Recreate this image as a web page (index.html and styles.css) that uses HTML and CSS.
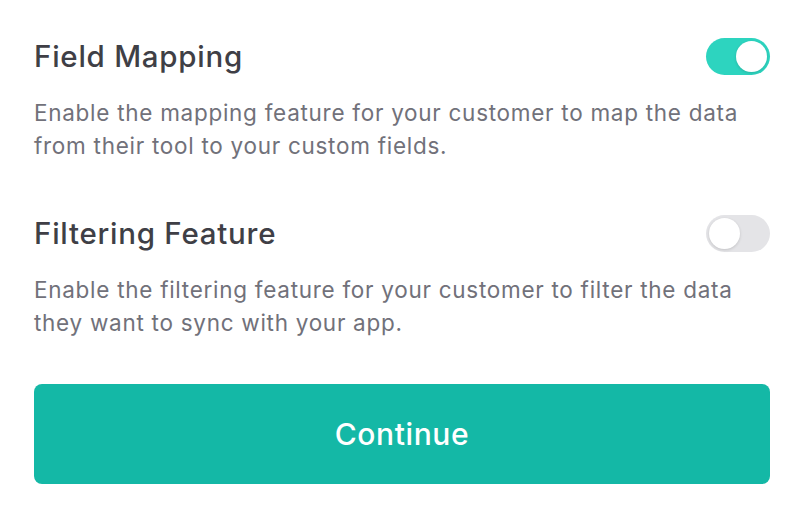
FILE: index.html
```html
<!DOCTYPE html>
<html>
<head>
<meta charset="utf-8">
<link rel="stylesheet" href="styles.css">
</head>
<body>
<div class="panel">
  <section class="setting">
    <div class="setting-head">
      <h2 class="setting-title">Field Mapping</h2>
      <span class="toggle on"><span class="knob"></span></span>
    </div>
    <p class="setting-desc">Enable the mapping feature for your customer to map the data from their tool to your custom fields.</p>
  </section>
  <section class="setting">
    <div class="setting-head">
      <h2 class="setting-title">Filtering Feature</h2>
      <span class="toggle"><span class="knob"></span></span>
    </div>
    <p class="setting-desc">Enable the filtering feature for your customer to filter the data they want to sync with your app.</p>
  </section>
  <button class="continue">Continue</button>
</div>
</body>
</html>
```
FILE: styles.css
```css
html, body {
  margin: 0;
  padding: 0;
  background: #ffffff;
}
body {
  font-family: Inter, "Noto Sans", sans-serif;
}
.panel {
  padding: 37px 40px 0 34px;
  display: flex;
  flex-direction: column;
}
.setting + .setting {
  margin-top: 52px;
}
.setting-head {
  display: flex;
  align-items: center;
  justify-content: space-between;
  height: 38px;
}
.setting-title {
  margin: 0;
  font-size: 29.5px;
  font-weight: 500;
  letter-spacing: 0.75px;
  color: #3f3f46;
  line-height: 38px;
}
.setting-desc {
  margin: 21px 0 0;
  font-size: 22.5px;
  letter-spacing: 0.72px;
  line-height: 33px;
  color: #71717a;
  max-width: 730px;
}
.toggle {
  width: 64px;
  height: 37px;
  border-radius: 19px;
  background: #e4e4e7;
  display: flex;
  align-items: center;
  padding: 0 3px;
  box-sizing: border-box;
}
.toggle.on {
  background: #2dd4bf;
  justify-content: flex-end;
}
.knob {
  width: 31px;
  height: 31px;
  border-radius: 50%;
  background: #ffffff;
  box-shadow: 0 1px 3px rgba(0,0,0,0.15);
}
.continue {
  margin-top: 45px;
  height: 100px;
  border: none;
  border-radius: 8px;
  background: #14b8a6;
  color: #ffffff;
  font-family: Inter, "Noto Sans", sans-serif;
  font-size: 30px;
  font-weight: 500;
  letter-spacing: 0.6px;
}
```
